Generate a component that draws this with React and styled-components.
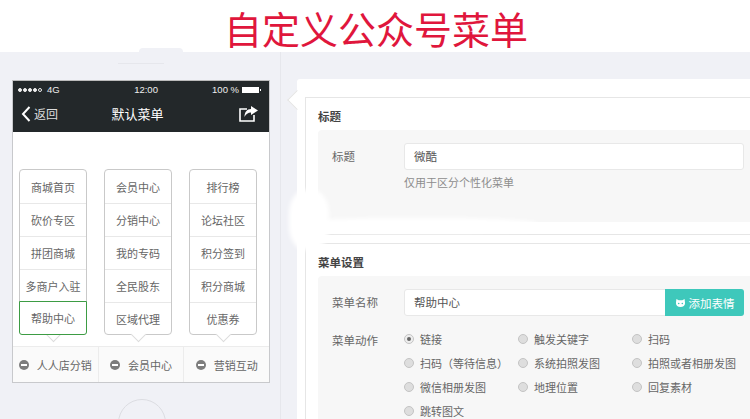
import React from "react";
import styled, { createGlobalStyle } from "styled-components";

const Global = createGlobalStyle`
  html, body { margin: 0; padding: 0; background: #fff; }
  body { width: 750px; height: 419px; overflow: hidden; font-family: "Noto Sans CJK SC", "Liberation Sans", sans-serif; color: #555; }
  * { box-sizing: border-box; }
`;

const Page = styled.div`width: 750px; height: 419px; overflow: hidden; display: flex; flex-direction: column;`;
const Heading = styled.h1`
  height: 52px; margin: 0; padding-left: 224px; font-size: 38px; line-height: 56px; font-weight: 400;
  color: #e0163c; letter-spacing: 0; white-space: nowrap;
`;
const Main = styled.div`flex: 1; display: flex; background: #f0f1f6; position: relative; min-height: 0;`;

const PhoneColumn = styled.div`
  width: 281px; flex: none; border-right: 1px solid #e6e7ec; position: relative; padding: 28px 0 0 12px;
`;
const Speaker = styled.div`
  position: absolute; left: 139px; top: -4px; width: 44px; height: 4px; background: #f0f1f6;
  border-radius: 10px 10px 0 0;
`;
const SpeakerLine = styled.div`
  position: absolute; left: 118px; top: 11px; width: 46px; height: 1px; background: #e6e7ec;
`;
const HomeButton = styled.div`
  position: absolute; left: 118px; top: 347px; width: 48px; height: 48px; border-radius: 50%;
  border: 1px solid #dcdde2;
`;
const Screen = styled.div`
  width: 258px; height: 303px; background: #fff; border: 1px solid #c8c9cc; border-top-color: #bbb;
  display: flex; flex-direction: column;
`;
const NavHeader = styled.div`background: #23282a; height: 51px; flex: none; color: #fff; padding: 0 5px 0 0;`;
const StatusBar = styled.div`
  height: 17px; display: flex; align-items: center; padding: 0 5px; font-size: 9px; color: #eee; position: relative;
  font-family: "Liberation Sans", sans-serif; justify-content: space-between; line-height: 1;
`;
const Signal = styled.div`display: flex; align-items: center; gap: 1px; width: 62px;`;
const Dot = styled.i`
  width: 4px; height: 4px; border-radius: 50%; border: 1px solid #eee; background: ${p => (p.$off ? "transparent" : "#eee")};
`;
const Carrier = styled.span`margin-left: 4px; font-size: 9.5px;`;
const Clock = styled.span`font-size: 9.5px;`;
const Battery = styled.div`display: flex; align-items: center; gap: 3px; font-size: 9.5px;`;
const BatteryBody = styled.i`
  display: block; width: 17px; height: 6px; background: #fff; position: relative;
  &::after { content: ""; position: absolute; right: -2px; top: 2px; width: 1px; height: 2px; background: #fff; }
`;
const NavRow = styled.div`display: flex; align-items: center; height: 33px; padding: 0 6px 2px 8px; justify-content: space-between; position: relative;`;
const Back = styled.div`display: flex; align-items: center; gap: 3px; font-size: 12px; color: #ddd;`;
const NavTitle = styled.div`
  position: absolute; left: 0; right: 0; top: 7px; text-align: center; font-size: 13px; line-height: 18px; color: #fff; padding-right: 2px;
`;

const Submenus = styled.div`flex: 1; display: flex; gap: 17px; padding: 37px 0 0 6px; align-items: flex-start;`;
const Submenu = styled.div`
  width: 68px; height: 166px; border: 1px solid #c9c9c9; border-radius: 4px; background: #fff; position: relative;
  display: flex; flex-direction: column; margin-top: ${p => p.$up ? "0" : "0"};
  &::after {
    content: ""; position: absolute; left: 28px; bottom: -6px; width: 10px; height: 10px; background: #fff;
    transform: rotate(45deg); border-right: 1px solid #dcdcdc; border-bottom: 1px solid #dcdcdc;
  }
`;
const SubItem = styled.div`
  height: 33px; flex: none; display: flex; align-items: center; justify-content: center; font-size: 11px; color: #666;
  white-space: nowrap; border-top: 1px solid ${p => (p.$first ? "transparent" : "#e8e8e8")};
  ${p => p.$active && `border: 1px solid #3d9c44; height: 34px; margin: -1px -1px -1px -1px; border-radius: 0 0 3px 3px; position: relative; z-index: 1; background:#fff;`}
`;
const TabBar = styled.div`
  height: 36px; flex: none; display: flex; background: #fafafa; border-top: 1px solid #ececec;
`;
const Tab = styled.div`
  flex: 1; display: flex; align-items: center; justify-content: center; gap: 8px; font-size: 11px; color: #666;
  white-space: nowrap; & + & { border-left: 1px solid #ececec; }
`;
const MinusIcon = styled.i`
  width: 10px; height: 10px; border-radius: 50%; background: #7d7d7d; position: relative; flex: none;
  &::after { content: ""; position: absolute; left: 2px; right: 2px; top: 4px; height: 2px; background: #fff; }
`;

const FormColumn = styled.div`flex: 1; padding: 27px 0 0 16px; position: relative; min-width: 0;`;
const Card = styled.div`
  background: #fff; border-radius: 3px 0 0 0; height: 400px; padding: 18px 0 0 8px; position: relative;
  &::before {
    content: ""; position: absolute; left: -7px; top: 14px; width: 13px; height: 13px; background: #fff; transform: rotate(45deg);
    border-left: 1px solid #e4e4e4; border-bottom: 1px solid #e4e4e4;
  }
`;
const Section = styled.section`
  border: 1px solid #e6e6e6; border-right: none; padding: 0 7px 0 12px; height: ${p => p.$h}px; margin-bottom: 8px; background: #fff; position: relative;
`;
const SectionTitle = styled.h3`
  margin: 0; font-size: 11.5px; font-weight: 700; color: #444; height: 32px; line-height: 36px;
`;
const FormBox = styled.div`background: #f7f7f7; border-radius: 4px 0 0 0; margin-right: -7px; padding: 13px 7px 0 14px; height: ${p => p.$h}px;`;
const FormRow = styled.div`display: flex; margin-bottom: ${p => p.$mb || 0}px;`;
const Label = styled.div`width: 72px; flex: none; font-size: 11.5px; line-height: 26px; color: #666;`;
const Field = styled.div`flex: 1; min-width: 0;`;
const InputWrap = styled.div`
  width: 340px; height: 27px; display: flex; background: #fff; border: 1px solid #e8e8e8; border-radius: 3px;
`;
const InputText = styled.div`flex: 1; padding-left: 9px; font-size: 11.5px; line-height: 25px; color: #555;`;
const Hint = styled.div`font-size: 11px; color: #8d8d8d; margin-top: 4px; line-height: 16px;`;
const AddButton = styled.div`
  width: 79px; margin: -1px -1px -1px 0; background: #3ec8bb; color: #fff; border-radius: 0 3px 3px 0; display: flex;
  align-items: center; justify-content: center; gap: 3px; font-size: 11.5px;
`;
const Radios = styled.div`display: grid; grid-template-columns: 114px 114px 114px; grid-auto-rows: 24px; width: 344px; margin-top: 0;`;
const RadioItem = styled.div`display: flex; align-items: center; gap: 6px; font-size: 11px; color: #666; white-space: nowrap;`;
const RadioDot = styled.i`
  width: 10px; height: 10px; border-radius: 50%; border: 1px solid #c4c4c4; background: #dedede; flex: none; position: relative;
  ${p => p.$on && `background: #eee; &::after { content: ""; position: absolute; left: 2px; top: 2px; width: 4px; height: 4px; border-radius: 50%; background: #666; }`}
`;
const Smudge = styled.div`
  position: absolute; background: #fff; border-radius: 40%; filter: blur(2px); z-index: 3;
  left: ${p => p.$l}px; top: ${p => p.$t}px; width: ${p => p.$w}px; height: ${p => p.$h}px;
`;

const Cat = () => (
  <svg width="11" height="10" viewBox="0 0 24 22" fill="#fff" aria-hidden="true">
    <path d="M3 2l5 3h8l5-3 1 9c0 6-4 9-10 9S2 17 2 11z" />
    <circle cx="8" cy="12" r="1.8" fill="#3ec8bb" />
    <circle cx="16" cy="12" r="1.8" fill="#3ec8bb" />
  </svg>
);

const columns = [
  ["商城首页", "砍价专区", "拼团商城", "多商户入驻", "帮助中心"],
  ["会员中心", "分销中心", "我的专码", "全民股东", "区域代理"],
  ["排行榜", "论坛社区", "积分签到", "积分商城", "优惠券"],
];
const radios = ["链接", "触发关键字", "扫码", "扫码（等待信息）", "系统拍照发图", "拍照或者相册发图", "微信相册发图", "地理位置", "回复素材", "跳转图文"];

export default function App() {
  return (
    <Page>
      <Global />
      <Heading>自定义公众号菜单</Heading>
      <Main>
        <PhoneColumn>
          <Speaker />
          <SpeakerLine />
          <Screen>
            <NavHeader>
              <StatusBar>
                <Signal>
                  <Dot /><Dot /><Dot /><Dot /><Dot $off />
                  <Carrier>4G</Carrier>
                </Signal>
                <Clock>12:00</Clock>
                <Battery>100 %<BatteryBody /></Battery>
              </StatusBar>
              <NavRow>
                <Back>
                  <svg width="10" height="16" viewBox="0 0 10 16" fill="none" stroke="#fff" strokeWidth="2" aria-hidden="true"><path d="M8.5 1L2 8l6.5 7" /></svg>
                  返回
                </Back>
                <NavTitle>默认菜单</NavTitle>
                <svg width="19" height="16" viewBox="0 0 19 16" fill="none" aria-hidden="true">
                  <path d="M8 3H1v12h14V9" stroke="#fff" strokeWidth="1.6" />
                  <path d="M12 0l7 4.5L12 9V6.5C9 6.5 7 8 5.5 11c0-5 2.5-8 6.5-8z" fill="#fff" />
                </svg>
              </NavRow>
            </NavHeader>
            <Submenus>
              {columns.map((col, c) => (
                <Submenu key={c}>
                  {col.map((t, i) => (
                    <SubItem key={t} $first={i === 0} $active={c === 0 && i === 4}>{t}</SubItem>
                  ))}
                </Submenu>
              ))}
            </Submenus>
            <TabBar>
              {["人人店分销", "会员中心", "营销互动"].map(t => (
                <Tab key={t}><MinusIcon />{t}</Tab>
              ))}
            </TabBar>
          </Screen>
          <HomeButton />
        </PhoneColumn>
        <FormColumn>
          <Card>
            <Section $h={138}>
              <SectionTitle>标题</SectionTitle>
              <FormBox $h={92}>
                <FormRow>
                  <Label>标题</Label>
                  <Field>
                    <InputWrap><InputText>微酷</InputText></InputWrap>
                    <Hint>仅用于区分个性化菜单</Hint>
                  </Field>
                </FormRow>
              </FormBox>
            </Section>
            <Section $h={200}>
              <SectionTitle>菜单设置</SectionTitle>
              <FormBox $h={160}>
                <FormRow $mb={11}>
                  <Label>菜单名称</Label>
                  <Field>
                    <InputWrap>
                      <InputText>帮助中心</InputText>
                      <AddButton><Cat />添加表情</AddButton>
                    </InputWrap>
                  </Field>
                </FormRow>
                <FormRow>
                  <Label>菜单动作</Label>
                  <Field>
                    <Radios>
                      {radios.map((r, i) => (
                        <RadioItem key={r}><RadioDot $on={i === 0} />{r}</RadioItem>
                      ))}
                    </Radios>
                  </Field>
                </FormRow>
              </FormBox>
            </Section>
          </Card>
          <Smudge $l={8} $t={138} $w={40} $h={60} />
          <Smudge $l={16} $t={166} $w={240} $h={14} />
          <Smudge $l={30} $t={172} $w={235} $h={8} />
        </FormColumn>
      </Main>
    </Page>
  );
}
